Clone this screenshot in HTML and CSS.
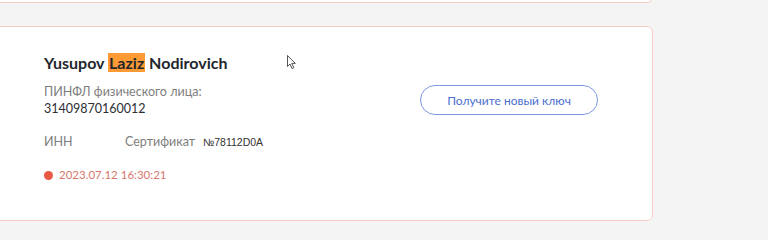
FILE: index.html
```html
<!DOCTYPE html>
<html lang="en">

<head>
    <meta charset="UTF-8">
    <meta name="viewport" content="width=device-width, initial-scale=1.0">
    <title>Ключи</title>
    <link rel="stylesheet" href="styles.css">
</head>

<body>
    <div id="list">
        <div class="card card-prev"></div>
        <div class="card key-card">
            <div class="key-info">
                <p class="owner">Yusupov <span class="mark">Laziz</span> Nodirovich</p>
                <p class="label">ПИНФЛ физического лица:</p>
                <p class="value">31409870160012</p>
                <div class="meta-row">
                    <span class="label inn">ИНН</span>
                    <span class="label">Сертификат</span>
                    <span class="cert-no">№78112D0A</span>
                </div>
                <p class="expired"><span class="dot"></span>2023.07.12 16:30:21</p>
            </div>
            <div class="key-actions">
                <button class="button-outline">Получите новый ключ</button>
            </div>
        </div>
    </div>
    <svg class="cursor" width="10" height="15" viewBox="0 0 10 15">
        <path d="M0.5 0.5 L0.5 11.5 L3 9 L5 13.5 L6.8 12.7 L4.8 8.4 L8.3 8.4 Z" fill="#fff" stroke="#444" stroke-width="0.9" />
    </svg>
</body>

</html>
```

FILE: styles.css
```css
* {
    margin: 0;
    padding: 0;
    box-sizing: border-box;
}

body {
    background-color: #f4f4f4;
    font-family: Lato, "Noto Sans", sans-serif;
    color: #2b2e33;
    overflow: hidden;
}

#list {
    margin: -20px 115px 0 -20px;
}

.card {
    background-color: #fff;
    border: 1px solid #f6cdc4;
    border-radius: 6px;
}

.card-prev {
    height: 23px;
    margin-bottom: 23px;
}

.key-card {
    display: flex;
    justify-content: space-between;
    padding: 26px 54px 37px 63px;
}

.owner {
    font-size: 16px;
    font-weight: 700;
    line-height: 20px;
    margin-bottom: 10px;
    color: #23272d;
}

.mark {
    background-color: #ff9a35;
    padding: 0 1px;
}

.label {
    font-size: 12.5px;
    line-height: 17px;
    color: #7e7e7e;
}

.value {
    font-size: 12.5px;
    line-height: 17px;
    color: #2b2e33;
}

.meta-row {
    display: flex;
    align-items: baseline;
    margin-top: 16px;
}

.inn {
    width: 81px;
}

.cert-no {
    font-family: "Liberation Sans", Arial, sans-serif;
    font-size: 10.5px;
    color: #333;
    margin-left: 8px;
}

.expired {
    display: flex;
    align-items: center;
    margin-top: 17px;
    font-size: 11.5px;
    line-height: 16px;
    color: #d6786c;
}

.dot {
    width: 9px;
    height: 9px;
    border-radius: 50%;
    background-color: #ea5a43;
    margin-right: 6px;
}

.key-actions {
    padding-top: 32px;
}

/* Button */
.button-outline {
    width: 178px;
    height: 30px;
    background-color: #fff;
    border: 1px solid #7d99e2;
    border-radius: 15px;
    color: #4b6ecf;
    font-family: Lato, "Noto Sans", sans-serif;
    font-size: 12px;
    outline: none;
}

.cursor {
    position: absolute;
    left: 287px;
    top: 55px;
}
```
